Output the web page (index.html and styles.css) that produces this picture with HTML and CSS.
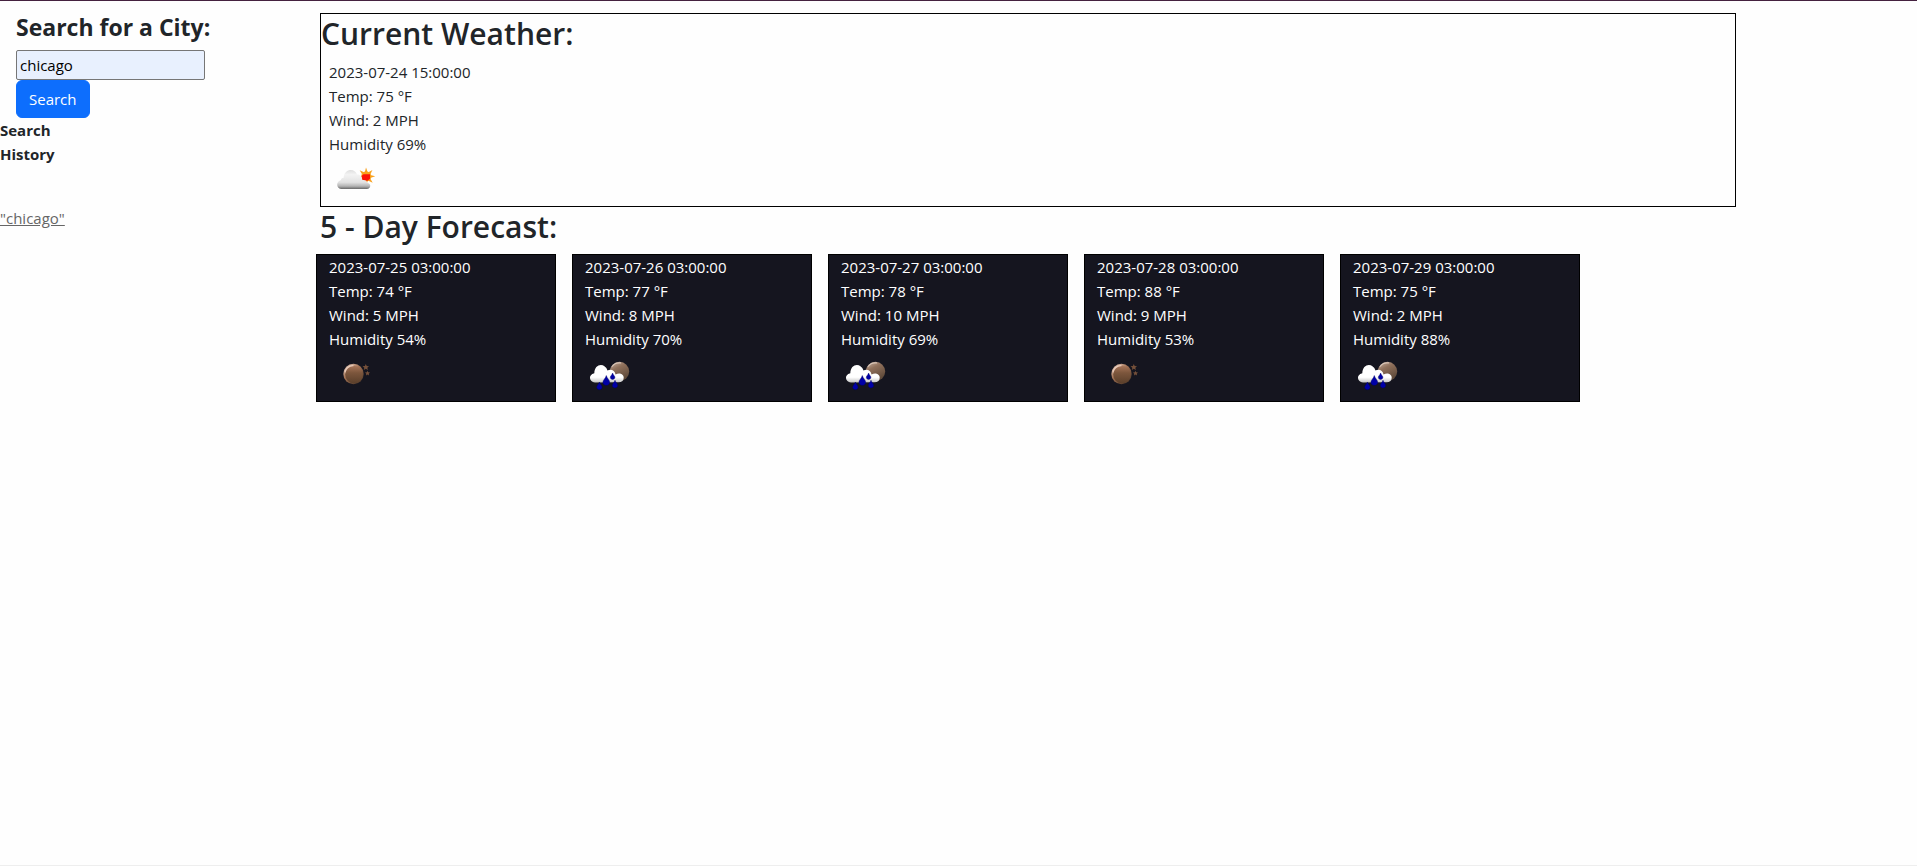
FILE: index.html
```html
<!DOCTYPE html>
<html lang="en">
<head>
<meta charset="utf-8">
<title>Weather Dashboard</title>
<link rel="stylesheet" href="styles.css">
</head>
<body>
<svg class="defs" aria-hidden="true">
  <defs>
    <linearGradient id="cloudShade" x1="0" y1="0" x2="0" y2="1">
      <stop offset="0" stop-color="#dedede"/><stop offset=".25" stop-color="#f3f3f3"/><stop offset=".65" stop-color="#e2e2e2"/><stop offset=".85" stop-color="#b4b4b4"/><stop offset="1" stop-color="#686868"/>
    </linearGradient>
    <linearGradient id="whiteCloud" x1="0" y1="0" x2="0" y2="1">
      <stop offset="0" stop-color="#fff"/><stop offset=".7" stop-color="#fff"/><stop offset="1" stop-color="#c4c4c4"/>
    </linearGradient>
    <linearGradient id="moonShade" x1="0" y1="0" x2="0" y2="1">
      <stop offset="0" stop-color="#a8765a"/><stop offset=".4" stop-color="#7c563c"/><stop offset="1" stop-color="#5a3f2b"/>
    </linearGradient>
    <linearGradient id="moonRim" x1="0" y1="0" x2=".8" y2="1">
      <stop offset="0" stop-color="#f3ddd0"/><stop offset=".45" stop-color="#a47355"/><stop offset="1" stop-color="#4a3526"/>
    </linearGradient>
    <linearGradient id="moonPale" x1="0" y1="0" x2=".5" y2="1">
      <stop offset="0" stop-color="#cdb6a7"/><stop offset=".4" stop-color="#8f705b"/><stop offset="1" stop-color="#5e4939"/>
    </linearGradient>
    <symbol id="cloudy-day" viewBox="0 0 50 50">
      <g fill="#f9a01b">
        <path id="ray" d="M35.700 16.500l1.300-5 1.800 5z"/>
        <use href="#ray" transform="rotate(45 37.200 20.500)"/>
        <use href="#ray" transform="rotate(90 37.200 20.500)"/>
        <use href="#ray" transform="rotate(135 37.200 20.500)"/>
        <use href="#ray" transform="rotate(180 37.200 20.500)"/>
        <use href="#ray" transform="rotate(-45 37.200 20.500)"/>
        <circle cx="37.200" cy="20.500" r="5"/>
      </g>
      <path fill="#fb1206" d="M32.500 20l2-1.800h6.500v4.500l-2.500 2-5-.5z"/>
      <path fill="url(#cloudShade)" d="M12 33c-5-1-5-7.500-.3-8.800.5-1.700 1.500-2.500 3-2.500C15 12.500 26 11.500 28 18.500c3 0 5 1.500 5.200 5.500 3-.5 4.800.8 5 2.800 4.200.5 4.200 6.200-.5 6.200z"/>
    </symbol>
    <symbol id="clear-night" viewBox="0 0 50 50">
      <circle cx="24.500" cy="23" r="10.200" fill="url(#moonRim)"/>
      <circle cx="25" cy="23.600" r="8.800" fill="url(#moonShade)"/>
      <path fill="none" stroke="#f0d5c5" stroke-width="1.200" stroke-linecap="round" d="M16 21c1-4 4-6 8-6.300" opacity=".8"/>
      <path fill="#75503a" d="M36.800 13l.9 2 2.300.2-1.700 1.500.6 2.300-2.100-1.200-2 1.200.5-2.300-1.800-1.500 2.400-.2zM38.500 19.800l.7 1.500 1.800.2-1.300 1.200.4 1.700-1.600-.9-1.500.9.300-1.700-1.300-1.200 1.900-.2z"/>
    </symbol>
    <symbol id="rain-night" viewBox="0 0 50 50">
      <circle cx="34.500" cy="20.500" r="9.700" fill="url(#moonPale)"/>
      <path fill="none" stroke="#ead8cc" stroke-width="1.200" stroke-linecap="round" d="M27 15.500c2-2.800 5-4 8.500-3.600" opacity=".7"/>
      <path fill="url(#whiteCloud)" d="M10 31.500c-6-.5-7-8-.7-9.200C9.500 12 20 11.500 22.500 19.500c3-1.800 7.500-.5 8 4 5-2.500 8.500.5 8.200 3.500-.2 3-2.200 4.200-5 4.200z"/>
      <g fill="#0000a6" stroke="#000066" stroke-width=".4">
        <path d="M21.300 24.500c.8 3 3.400 4.500 3.400 6.700 0 4.200-6.800 4.200-6.800 0 0-2.200 2.600-3.700 3.400-6.700z"/>
        <path d="M27.600 22c.5 2 2.300 3 2.300 4.300 0 2.800-4.600 2.800-4.600 0 0-1.300 1.800-2.300 2.300-4.300z"/>
        <path d="M14.400 31c.6 2.300 2.700 3.400 2.700 5.200 0 3.300-5.400 3.300-5.400 0 0-1.800 2.100-2.900 2.700-5.200z"/>
        <path d="M30 29.200c.6 2.300 2.700 3.400 2.700 5.200 0 3.300-5.400 3.300-5.400 0 0-1.800 2.100-2.900 2.700-5.200z"/>
      </g>
    </symbol>
  </defs>
</svg>
<div class="layout">
  <aside class="sidebar">
    <form class="search-form">
      <label class="search-label" for="city">Search for a City:</label>
      <input class="search-input" id="city" type="text" value="chicago">
      <button class="search-button" type="button">Search</button>
    </form>
    <h2 class="history-title">Search<br>History</h2>
    <a class="history-link" href="#">"chicago"</a>
  </aside>
  <main class="content">
    <section class="current">
      <h1 class="title">Current Weather:</h1>
      <div class="current-body">
        <p>2023-07-24 15:00:00</p><p>Temp: 75 °F</p><p>Wind: 2 MPH</p><p>Humidity 69%</p>
        <svg class="icon"><use href="#cloudy-day"/></svg>
      </div>
    </section>
    <section>
      <h1 class="title forecast-title">5 - Day Forecast:</h1>
      <div class="cards">
        <article class="card">
          <p>2023-07-25 03:00:00</p><p>Temp: 74 °F</p><p>Wind: 5 MPH</p><p>Humidity 54%</p>
          <svg class="icon"><use href="#clear-night"/></svg>
        </article>
        <article class="card">
          <p>2023-07-26 03:00:00</p><p>Temp: 77 °F</p><p>Wind: 8 MPH</p><p>Humidity 70%</p>
          <svg class="icon"><use href="#rain-night"/></svg>
        </article>
        <article class="card">
          <p>2023-07-27 03:00:00</p><p>Temp: 78 °F</p><p>Wind: 10 MPH</p><p>Humidity 69%</p>
          <svg class="icon"><use href="#rain-night"/></svg>
        </article>
        <article class="card">
          <p>2023-07-28 03:00:00</p><p>Temp: 88 °F</p><p>Wind: 9 MPH</p><p>Humidity 53%</p>
          <svg class="icon"><use href="#clear-night"/></svg>
        </article>
        <article class="card">
          <p>2023-07-29 03:00:00</p><p>Temp: 75 °F</p><p>Wind: 2 MPH</p><p>Humidity 88%</p>
          <svg class="icon"><use href="#rain-night"/></svg>
        </article>
      </div>
    </section>
  </main>
</div>
</body>
</html>
```
FILE: styles.css
```css
* {
  box-sizing: border-box;
}

body {
  margin: 0;
  min-height: 100vh;
  border-top: 1px solid #44213f;
  border-bottom: 1px solid #eeeeee;
  background: #fefefe;
  color: #212529;
  font-family: "Open Sans", "Noto Sans", sans-serif;
  font-size: 15px;
  line-height: 24px;
}

p {
  margin: 0;
}

.defs {
  display: block;
  width: 0;
  height: 0;
}

.layout {
  display: flex;
  padding-top: 12px;
}

.sidebar {
  flex: none;
  width: 320px;
}

.search-form {
  display: flex;
  flex-direction: column;
  align-items: flex-start;
  padding-left: 16px;
}

.search-label {
  margin-bottom: 8px;
  font-size: 23px;
  font-weight: 700;
  line-height: 29px;
}

.search-input {
  width: 189px;
  height: 30px;
  padding: 1px 3px;
  border: 1px solid #767676;
  border-radius: 2px;
  background: #e8f0fe;
  color: #000000;
  font: inherit;
}

.search-button {
  padding: 6px 12px;
  border: 1px solid #0d6efd;
  border-radius: 6px;
  background: #0d6efd;
  color: #ffffff;
  font: inherit;
}

.history-title {
  margin: 0 0 40px;
  font-size: 15px;
  font-weight: 700;
  line-height: 24px;
}

.history-link {
  color: #666666;
}

.content {
  flex: 1;
  min-width: 0;
  padding-right: 9.44%;
}

.current {
  border: 1px solid #000000;
}

.current-body {
  padding-left: 8px;
}

.title {
  margin: 0 0 6px;
  font-size: 30px;
  font-weight: 600;
  line-height: 40px;
}

.forecast-title {
  margin-bottom: 7px;
}

.cards {
  display: flex;
  flex-wrap: wrap;
  gap: 16px;
  margin-left: -4px;
}

.card {
  flex: 0 0 240px;
  padding: 0 12px;
  border: 1px solid #000000;
  background: #15151f;
  color: #ffffff;
}

.icon {
  display: block;
  width: 50px;
  height: 50px;
}
```
